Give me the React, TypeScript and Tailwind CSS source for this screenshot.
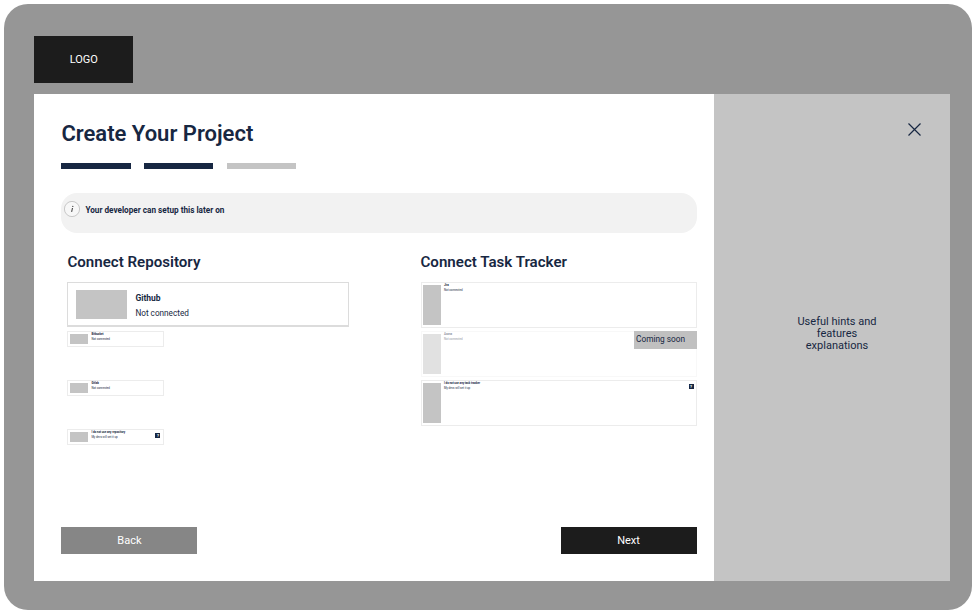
import { clsx } from "clsx";

type Option = {
  name: string;
  status: string;
  hint?: boolean;
  soon?: boolean;
};

const repositories: Option[] = [
  { name: "Bitbucket", status: "Not connected" },
  { name: "Gitlab", status: "Not connected" },
  { name: "I do not use any repository", status: "My devs will set it up", hint: true },
];

const trackers: Option[] = [
  { name: "Jira", status: "Not connected" },
  { name: "Asana", status: "Not connected", soon: true },
  { name: "I do not use any task tracker", status: "My devs will set it up", hint: true },
];

const steps = [true, true, false];

const HintBadge = () => (
  <span className="flex h-[5px] w-[5px] items-center justify-center bg-[#172742] text-[4px] leading-none font-bold text-white">
    ?
  </span>
);

const OptionText = ({ name, status }: Option) => (
  <div className="flex flex-col text-[2.85px] leading-[5px] whitespace-nowrap">
    <span className="font-bold">{name}</span>
    <span>{status}</span>
  </div>
);

const RepositoryCard = (option: Option) => (
  <div className="flex h-4 w-[97px] border border-[#ececec] pr-[3px] pl-[2px]">
    <div className="mt-[2px] mr-[3px] h-[10px] w-[18px] shrink-0 bg-[#c4c4c4]" />
    <OptionText {...option} />
    {option.hint && (
      <div className="mt-[3px] ml-auto">
        <HintBadge />
      </div>
    )}
  </div>
);

const TrackerCard = (option: Option) => (
  <div
    className={clsx(
      "flex h-[46px] w-[276px] border pl-[1.5px]",
      option.soon ? "border-[#f8f8f8]" : "border-[#ececec]"
    )}
  >
    <div className={clsx("flex", option.soon && "opacity-50")}>
      <div className="mt-[2px] mr-[3px] h-10 w-[18px] shrink-0 bg-[#c4c4c4]" />
      <OptionText {...option} />
    </div>
    {option.hint && (
      <div className="mt-[3px] mr-[2px] ml-auto">
        <HintBadge />
      </div>
    )}
    {option.soon && (
      <div className="-mt-px -mr-px ml-auto h-[18px] w-[62.5px] bg-[#c0c0c0] pl-[2px] text-[8.3px] leading-[17px]">
        Coming soon
      </div>
    )}
  </div>
);

const App = () => {
  return (
    <div className="h-[614px] w-[976px] bg-white p-1 font-['Roboto',sans-serif] text-[#172742]">
      <div className="flex h-[606px] w-[968px] flex-col rounded-[24px] bg-[#969696] pt-8 pl-[30px]">
        <div className="flex h-[47px] w-[98.5px] items-center justify-center bg-[#1c1c1c] pt-px pl-px text-[11px] text-white">
          LOGO
        </div>

        <div className="mt-[11px] flex h-[487px] w-[916px]">
          <main className="flex w-[680px] flex-col bg-white pt-[27px] pr-[17.5px] pb-[27px] pl-[27.4px]">
            <h1 className="text-[22px] leading-[26px] font-semibold">Create Your Project</h1>

            {/* Step progress */}
            <div className="mt-4 flex gap-[13.5px]">
              {steps.map((done, i) => (
                <div key={i} className={clsx("h-[6px] w-[69.3px]", done ? "bg-[#172742]" : "bg-[#c4c4c4]")} />
              ))}
            </div>

            <div className="mt-6 flex h-10 items-start rounded-[16px] bg-[#f2f2f2] pt-2 pl-[3px]">
              <svg width="16" height="16" viewBox="0 0 16 16" className="shrink-0" fill="none">
                <circle cx="8" cy="8" r="7.6" fill="#f7f7f7" stroke="#bcbcbc" strokeWidth="0.8" />
                <path d="M8.5 7 7.6 10.9" stroke="#444" strokeWidth="1.1" />
                <circle cx="8.8" cy="5.4" r="0.65" fill="#444" />
              </svg>
              <span className="ml-[5px] text-[8.2px] leading-[18px] font-bold">Your developer can setup this later on</span>
            </div>

            <div className="mt-5 flex">
              <section className="w-[353.2px] pl-[6px]">
                <h2 className="text-[15.1px] leading-[19px] font-semibold">Connect Repository</h2>
                <div className="mt-[10px] flex h-[45px] w-[282px] items-center border-x border-t border-b-2 border-[#dcdcdc] pl-2">
                  <div className="mr-2 h-[29px] w-[51px] bg-[#c4c4c4]" />
                  <div className="flex flex-col pt-[3px] text-[8.5px] leading-[15px]">
                    <span className="font-bold">Github</span>
                    <span className="text-[8.2px]">Not connected</span>
                  </div>
                </div>
                <div className="mt-1 flex flex-col gap-[33px]">
                  {repositories.map((item) => (
                    <RepositoryCard key={item.name} {...item} />
                  ))}
                </div>
              </section>

              <section className="pl-[6px]">
                <h2 className="text-[15.1px] leading-[19px] font-semibold">Connect Task Tracker</h2>
                <div className="mt-[10px] flex flex-col gap-[3px]">
                  {trackers.map((item) => (
                    <TrackerCard key={item.name} {...item} />
                  ))}
                </div>
              </section>
            </div>

            <div className="mt-auto flex justify-between">
              <button className="h-[27px] w-[136px] bg-[#868686] pt-px text-[11px] text-white">Back</button>
              <button className="h-[27px] w-[136px] bg-[#1c1c1c] pt-px text-[11px] text-white">Next</button>
            </div>
          </main>

          <aside className="flex w-[236px] flex-col bg-[#c4c4c4]">
            <button className="mt-[29px] mr-[29px] self-end" aria-label="Close">
              <svg width="13" height="13" viewBox="0 0 13 13" fill="none" stroke="#172742" strokeWidth="1.2">
                <path d="M0.5 0.5 12.5 12.5M12.5 0.5 0.5 12.5" />
              </svg>
            </button>
            <p className="mt-[180px] ml-[10px] w-[90px] self-center text-center text-[11px] leading-3">
              Useful hints and features explanations
            </p>
          </aside>
        </div>
      </div>
    </div>
  );
};

export default App;
